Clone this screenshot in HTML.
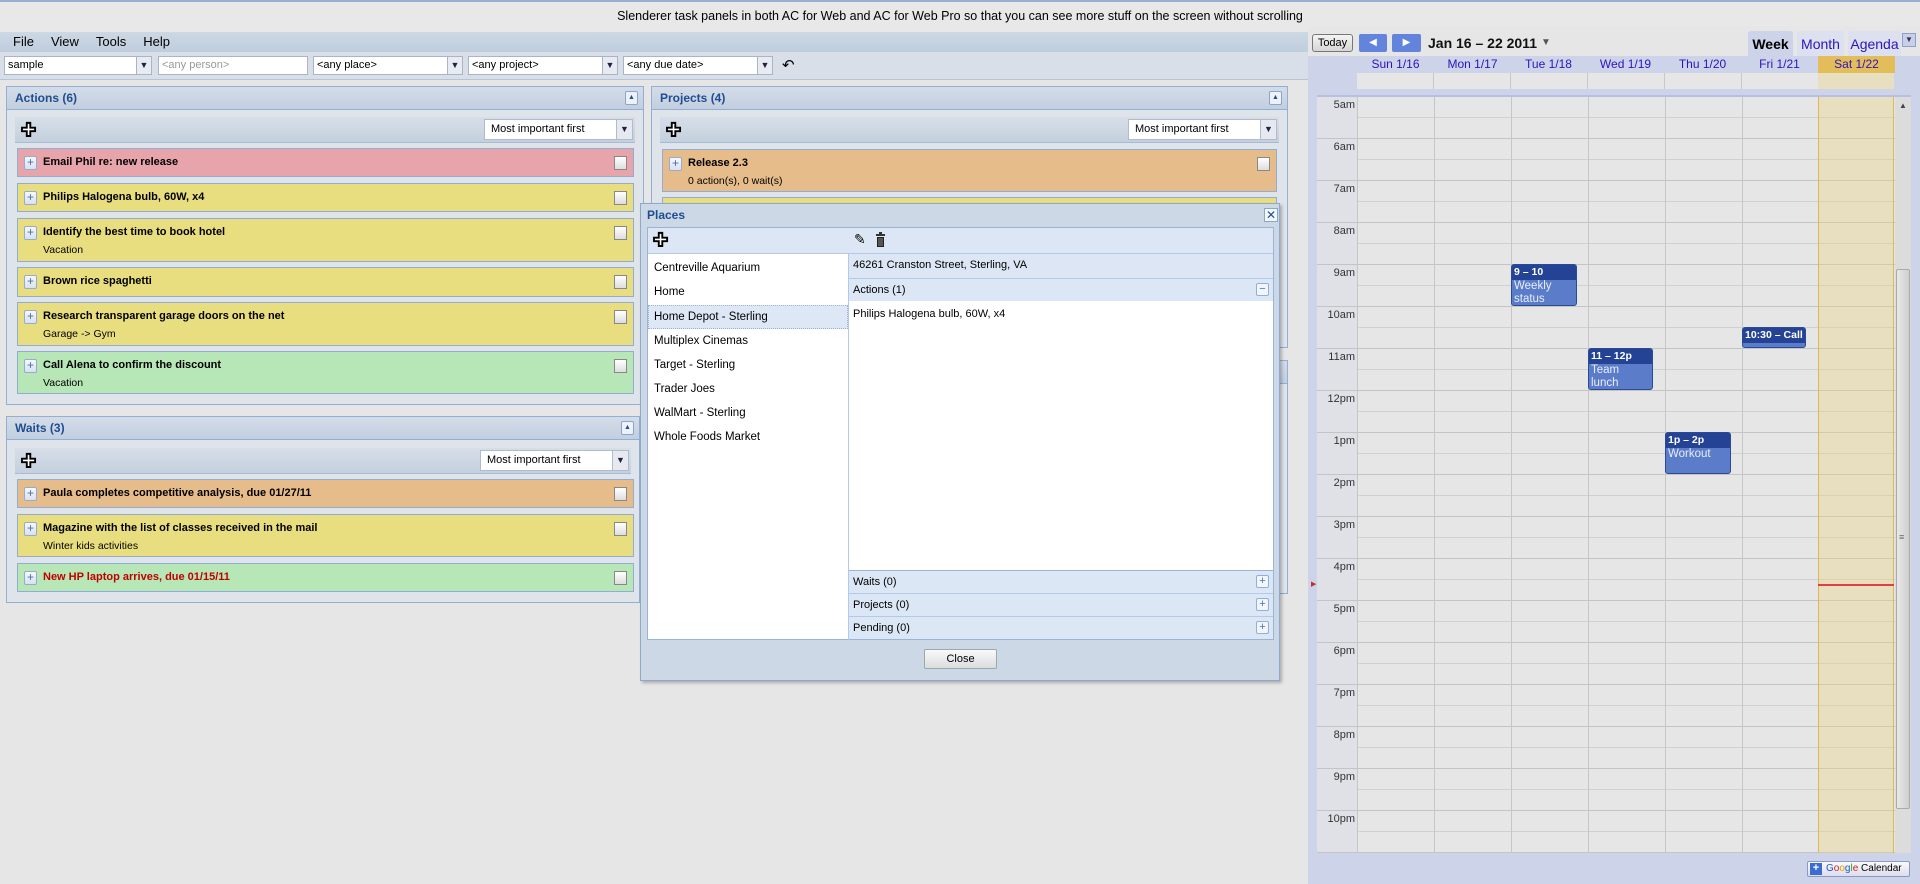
<!DOCTYPE html>
<html><head><meta charset="utf-8"><style>
*{box-sizing:border-box;margin:0;padding:0}
body{width:1920px;height:884px;overflow:hidden;background:#e6e6e6;font-family:"Liberation Sans",sans-serif;font-size:12px;color:#000;position:relative}
.a{position:absolute}
.title{left:0;top:0;width:1920px;height:32px;background:#e8e8e8;border-top:2px solid #9ab0d0;text-align:center;line-height:28px;font-size:12.5px}
.menu{left:0;top:32px;width:1308px;height:20px;background:linear-gradient(#cdd8e5,#bfcddd);font-size:13px;line-height:20px}
.menu span{margin-left:13px;margin-right:4px}
.tb{left:0;top:52px;width:1308px;height:28px;background:#d8dfe8;border-bottom:1px solid #b8c4d4}
.sel{position:absolute;top:4px;height:19px;background:#fff;border:1px solid #a9b5c4;font-size:11px;line-height:17px;padding-left:3px}
.sel i{position:absolute;right:0;top:0;width:15px;height:17px;border-left:1px solid #a9b5c4;background:#e8ecf2;font-style:normal;font-size:9px;text-align:center;color:#224}
.panel{position:absolute;background:#dfe4ea;border:1px solid #94afd4}
.ph{position:absolute;left:0;top:0;right:0;height:23px;background:linear-gradient(#d4dce8,#c2cfe0);border-bottom:1px solid #94afd4;color:#1f4d8f;font-weight:bold;font-size:12px;line-height:22px;padding-left:8px}
.ph b.c{position:absolute;right:5px;top:4px;width:13px;height:14px;background:#eef2f8;border:1px solid #8aa6cc;border-radius:2px;font-size:7px;line-height:12px;text-align:center;color:#1f4d8f}
.sb{position:absolute;left:8px;right:8px;height:26px;background:linear-gradient(#d7dee8,#c4d0de);border-bottom:1px solid #a9bbd2}
.plus{position:absolute;left:6px;top:5px;font-size:18px;line-height:16px;font-weight:bold;color:#fff;-webkit-text-stroke:1.2px #000}
.sort{position:absolute;right:2px;top:2px;width:149px;height:21px;background:#fff;border:1px solid #b0bccb;font-size:11px;line-height:19px;padding-left:6px}
.sort i{position:absolute;right:0;top:0;width:16px;height:19px;border-left:1px solid #b0bccb;background:#e6eaf0;font-style:normal;font-size:9px;text-align:center;color:#224}
.it{position:absolute;border:1px solid #90add6;font-size:11px}
.it .x{position:absolute;left:6px;top:7px;width:13px;height:14px;border:1px solid #95acd0;background:linear-gradient(#f6f8fc,#d8e2f0);border-radius:2px;color:#4a6ea8;font-size:12px;line-height:11px;text-align:center}
.it .t{position:absolute;left:25px;top:7px;font-weight:bold;font-size:11px}
.it .s{position:absolute;left:25px;top:25px;font-size:10.5px}
.it .cb{position:absolute;right:6px;top:7px;width:13px;height:14px;border:1px solid #888;background:linear-gradient(#fff,#ddd)}
.pk{background:#e8a4ab}.yl{background:#e8de80}.gr{background:#b7e6b7}.or{background:#e6bc8a}
.pl{position:absolute;left:10px;font-size:11.5px}
.cal{left:1308px;top:26px;width:612px;height:858px;background:#cdd3e8}
.day{position:absolute;top:56px;height:17px;width:77px;text-align:center;color:#2c14c0;font-size:12px;line-height:17px}
.tl{position:absolute;left:1317px;width:38px;text-align:right;font-size:11px;color:#333}
.ev{position:absolute;background:#5b7cc8;border:1px solid #2a4a98;border-radius:3px;color:#e8eefc;font-size:11.5px;overflow:hidden}
.ev b{display:block;background:#254394;color:#fff;font-size:10.5px;padding:1px 2px;height:15px;white-space:nowrap;overflow:hidden}
.ev span{display:block;padding:0 2px;line-height:13px;width:48px}
.rh{position:absolute;left:0;right:0;height:23px;background:#dce7f6;border-top:1px solid #b4c9e8;font-size:11px;line-height:22px;padding-left:4px}
.rh b{position:absolute;right:4px;top:4px;width:13px;height:13px;background:#f2f6fc;border:1px solid #8fb0da;border-radius:2px;color:#4a74b8;font-size:11px;line-height:10px;text-align:center;font-weight:normal}
</style></head><body>
<div class="a title">Slenderer task panels in both AC for Web and AC for Web Pro so that you can see more stuff on the screen without scrolling</div>
<div class="a menu"><span>File</span><span>View</span><span>Tools</span><span>Help</span></div>
<div class="a tb">
<div class="sel" style="left:4px;width:148px">sample<i>▼</i></div>
<div class="sel" style="left:158px;width:150px;color:#999">&lt;any person&gt;</div>
<div class="sel" style="left:313px;width:150px">&lt;any place&gt;<i>▼</i></div>
<div class="sel" style="left:468px;width:150px">&lt;any project&gt;<i>▼</i></div>
<div class="sel" style="left:623px;width:150px">&lt;any due date&gt;<i>▼</i></div>
<div class="a" style="left:782px;top:4px;font-size:15px">↶</div>
</div>

<div class="panel" style="left:6px;top:86px;width:638px;height:319px">
<div class="ph">Actions (6)<b class="c">▲</b></div>
<div class="sb" style="top:30px"><div class="plus">✚</div><div class="sort">Most important first<i>▼</i></div></div>
</div>
<div class="it pk" style="left:17px;top:148px;width:617px;height:29px"><div class="x">+</div><div class="t">Email Phil re: new release</div><div class="cb"></div></div>
<div class="it yl" style="left:17px;top:183px;width:617px;height:29px"><div class="x">+</div><div class="t">Philips Halogena bulb, 60W, x4</div><div class="cb"></div></div>
<div class="it yl" style="left:17px;top:218px;width:617px;height:44px"><div class="x">+</div><div class="t">Identify the best time to book hotel</div><div class="s">Vacation</div><div class="cb"></div></div>
<div class="it yl" style="left:17px;top:267px;width:617px;height:30px"><div class="x">+</div><div class="t">Brown rice spaghetti</div><div class="cb"></div></div>
<div class="it yl" style="left:17px;top:302px;width:617px;height:44px"><div class="x">+</div><div class="t">Research transparent garage doors on the net</div><div class="s">Garage -&gt; Gym</div><div class="cb"></div></div>
<div class="it gr" style="left:17px;top:351px;width:617px;height:43px"><div class="x">+</div><div class="t">Call Alena to confirm the discount</div><div class="s">Vacation</div><div class="cb"></div></div>

<div class="panel" style="left:6px;top:416px;width:634px;height:187px">
<div class="ph">Waits (3)<b class="c">▲</b></div>
<div class="sb" style="top:31px"><div class="plus">✚</div><div class="sort">Most important first<i>▼</i></div></div>
</div>
<div class="it or" style="left:17px;top:479px;width:617px;height:29px"><div class="x">+</div><div class="t">Paula completes competitive analysis, due 01/27/11</div><div class="cb"></div></div>
<div class="it yl" style="left:17px;top:514px;width:617px;height:43px"><div class="x">+</div><div class="t">Magazine with the list of classes received in the mail</div><div class="s">Winter kids activities</div><div class="cb"></div></div>
<div class="it gr" style="left:17px;top:563px;width:617px;height:29px"><div class="x">+</div><div class="t" style="color:#c00000">New HP laptop arrives, due 01/15/11</div><div class="cb"></div></div>

<div class="panel" style="left:651px;top:86px;width:637px;height:262px">
<div class="ph">Projects (4)<b class="c">▲</b></div>
<div class="sb" style="top:30px"><div class="plus">✚</div><div class="sort">Most important first<i>▼</i></div></div>
</div>
<div class="it or" style="left:662px;top:149px;width:615px;height:43px"><div class="x">+</div><div class="t">Release 2.3</div><div class="s">0 action(s), 0 wait(s)</div><div class="cb"></div></div>
<div class="it yl" style="left:662px;top:197px;width:615px;height:20px"></div>
<div class="panel" style="left:651px;top:360px;width:637px;height:234px"><div class="ph"></div></div>

<div class="a" style="left:640px;top:203px;width:640px;height:478px;background:#ccd8e6;border:1px solid #8fa9cc;box-shadow:2px 2px 3px rgba(0,0,0,.25)">
<div class="a" style="left:6px;top:4px;color:#1f4d8f;font-weight:bold;font-size:12px">Places</div>
<div class="a" style="left:623px;top:4px;width:14px;height:14px;border:1px solid #8aa6cc;background:#f4f7fb;color:#1f4d8f;font-size:12px;line-height:12px;text-align:center">✕</div>
<div class="a" style="left:6px;top:23px;width:627px;height:413px;background:#fff;border:1px solid #9ab4d8">
 <div class="a" style="left:0;top:0;width:625px;height:26px;background:#dce6f4;border-bottom:1px solid #b4c9e8"><div class="plus" style="left:5px;top:4px">✚</div><div class="a" style="left:206px;top:3px;font-size:14px">✎</div>
 <div class="a" style="left:228px;top:6px;width:9px;height:2px;background:#333"></div><div class="a" style="left:231px;top:4px;width:3px;height:2px;background:#333"></div><div class="a" style="left:229px;top:9px;width:7px;height:10px;background:#555;border:1px solid #222"></div></div>
 <div class="a" style="left:0;top:77px;width:200px;height:24px;background:#dde7f6;border:1px dotted #9ab4d8"></div>
 <div class="pl" style="left:6px;top:34px">Centreville Aquarium</div>
 <div class="pl" style="left:6px;top:58px">Home</div>
 <div class="pl" style="left:6px;top:83px">Home Depot - Sterling</div>
 <div class="pl" style="left:6px;top:107px">Multiplex Cinemas</div>
 <div class="pl" style="left:6px;top:131px">Target - Sterling</div>
 <div class="pl" style="left:6px;top:155px">Trader Joes</div>
 <div class="pl" style="left:6px;top:179px">WalMart - Sterling</div>
 <div class="pl" style="left:6px;top:203px">Whole Foods Market</div>
 <div class="a" style="left:200px;top:26px;width:425px;height:386px;border-left:1px solid #b4c9e8">
  <div class="a" style="left:0;top:0;width:424px;height:24px;background:#dce6f4;font-size:11px;line-height:22px;padding-left:4px">46261 Cranston Street, Sterling, VA</div>
  <div class="rh" style="top:24px">Actions (1)<b>−</b></div>
  <div class="a" style="left:4px;top:54px;font-size:11px">Philips Halogena bulb, 60W, x4</div>
  <div class="rh" style="top:316px;border-top-color:#9ab4d8">Waits (0)<b>+</b></div>
  <div class="rh" style="top:339px">Projects (0)<b>+</b></div>
  <div class="rh" style="top:362px">Pending (0)<b>+</b></div>
 </div>
</div>
<div class="a" style="left:283px;top:445px;width:73px;height:20px;border:1px solid #9aa;background:linear-gradient(#fafafa,#dcdcdc);border-radius:2px;text-align:center;line-height:18px;font-size:11px">Close</div>
</div>

<div class="a cal"></div>
<div class="a" style="left:1308px;top:26px;width:612px;height:30px;background:#e6e6e6"></div>
<div class="a" style="left:1312px;top:34px;width:41px;height:18px;border:1px solid #777;border-radius:3px;background:linear-gradient(#f4f4f4,#d6d6d6);font-size:11px;text-align:center;line-height:16px">Today</div>
<div class="a" style="left:1359px;top:34px;width:28px;height:18px;background:#6284dc;border-radius:2px;color:#fff;font-size:10px;text-align:center;line-height:18px">◀</div>
<div class="a" style="left:1392px;top:34px;width:29px;height:18px;background:#6284dc;border-radius:2px;color:#fff;font-size:10px;text-align:center;line-height:18px">▶</div>
<div class="a" style="left:1428px;top:34px;font-size:14px;font-weight:bold;line-height:18px;color:#111">Jan 16 – 22 2011</div>
<div class="a" style="left:1541px;top:37px;font-size:10px;color:#555">▼</div>
<div class="a" style="left:1748px;top:31px;width:45px;height:25px;background:#cdd3e8;border-radius:3px 3px 0 0;font-weight:bold;font-size:14px;text-align:center;line-height:26px">Week</div>
<div class="a" style="left:1797px;top:31px;width:47px;height:25px;background:#dde0ee;border-radius:3px 3px 0 0;color:#2c14c0;font-size:14px;text-align:center;line-height:26px">Month</div>
<div class="a" style="left:1848px;top:31px;width:53px;height:25px;background:#dde0ee;border-radius:3px 3px 0 0;color:#2c14c0;font-size:14px;text-align:center;line-height:26px">Agenda</div>
<div class="a" style="left:1902px;top:33px;width:14px;height:14px;background:#c8d0e8;border:1px solid #8da0cc;font-size:8px;color:#335;text-align:center;line-height:12px">▼</div>
<div class="day" style="left:1357px">Sun 1/16</div>
<div class="day" style="left:1434px">Mon 1/17</div>
<div class="day" style="left:1510px">Tue 1/18</div>
<div class="day" style="left:1587px">Wed 1/19</div>
<div class="day" style="left:1664px">Thu 1/20</div>
<div class="day" style="left:1741px">Fri 1/21</div>
<div class="day" style="left:1818px;background:#e2bd5a">Sat 1/22</div>
<div class="a" style="left:1357px;top:73px;width:537px;height:16px;background:#e6e6e6;background-image:repeating-linear-gradient(90deg,transparent 0 76px,#c8c8c8 76px 77px)"></div>
<div class="a" style="left:1818px;top:73px;width:76px;height:16px;background:#e8dfc0"></div>
<div class="a" style="left:1317px;top:95px;width:594px;height:2px;background:#b8bfe0"></div>
<div class="a" style="left:1317px;top:97px;width:40px;height:756px;background:#dfe1e6;background-image:repeating-linear-gradient(180deg,transparent 0 41px,#c4c4c4 41px 42px)"></div>
<div class="a" style="left:1357px;top:97px;width:538px;height:756px;background-color:#e6e6e6;background-image:repeating-linear-gradient(90deg,#c6c6c6 0 1px,transparent 1px 77px),repeating-linear-gradient(180deg,transparent 0 20px,#d0d0d0 20px 21px,transparent 21px 41px,#c4c4c4 41px 42px)"></div>
<div class="a" style="left:1818px;top:97px;width:76px;height:756px;background-color:#e8dfc0;border-left:1px solid #e0b850;border-right:1px solid #e0b850;background-image:repeating-linear-gradient(180deg,transparent 0 20px,#dcd2b0 20px 21px,transparent 21px 41px,#d4caa8 41px 42px)"></div>
<div class="a" style="left:1818px;top:584px;width:76px;height:2px;background:#e04040"></div>
<div class="a" style="left:1311px;top:580px;font-size:7px;color:#c03030">▶</div>
<div class="a" style="left:1895px;top:97px;width:16px;height:756px;background:#dcdcdc"></div>
<div class="a" style="left:1896px;top:269px;width:14px;height:540px;background:linear-gradient(90deg,#e8e8e8,#cfcfcf);border:1px solid #aaa;border-radius:2px"></div>
<div class="a" style="left:1899px;top:101px;font-size:8px;color:#444">▲</div>
<div class="a" style="left:1899px;top:532px;font-size:9px;color:#666">≡</div>
<div class="tl" style="top:99px">5am</div><div class="tl" style="top:141px">6am</div><div class="tl" style="top:183px">7am</div><div class="tl" style="top:225px">8am</div><div class="tl" style="top:267px">9am</div><div class="tl" style="top:309px">10am</div><div class="tl" style="top:351px">11am</div><div class="tl" style="top:393px">12pm</div><div class="tl" style="top:435px">1pm</div><div class="tl" style="top:477px">2pm</div><div class="tl" style="top:519px">3pm</div><div class="tl" style="top:561px">4pm</div><div class="tl" style="top:603px">5pm</div><div class="tl" style="top:645px">6pm</div><div class="tl" style="top:687px">7pm</div><div class="tl" style="top:729px">8pm</div><div class="tl" style="top:771px">9pm</div><div class="tl" style="top:813px">10pm</div>
<div class="ev" style="left:1511px;top:264px;width:66px;height:42px"><b>9 – 10</b><span>Weekly status</span></div>
<div class="ev" style="left:1742px;top:327px;width:64px;height:21px"><b>10:30 – Call J</b></div>
<div class="ev" style="left:1588px;top:348px;width:65px;height:42px"><b>11 – 12p</b><span>Team lunch</span></div>
<div class="ev" style="left:1665px;top:432px;width:66px;height:42px"><b>1p – 2p</b><span>Workout</span></div>
<div class="a" style="left:1807px;top:861px;width:103px;height:16px;border:1px solid #8a9ac0;border-radius:2px;background:linear-gradient(#fafafa,#dde);font-size:10px;line-height:14px;padding-left:18px"><span style="position:absolute;left:2px;top:1px;width:12px;height:12px;background:#3b6cd0;color:#fff;font-size:11px;line-height:11px;text-align:center;font-weight:bold">+</span><span style="color:#2255cc">G</span><span style="color:#cc2222">o</span><span style="color:#e0a000">o</span><span style="color:#2255cc">g</span><span style="color:#22aa22">l</span><span style="color:#cc2222">e</span> Calendar</div>
</body></html>
